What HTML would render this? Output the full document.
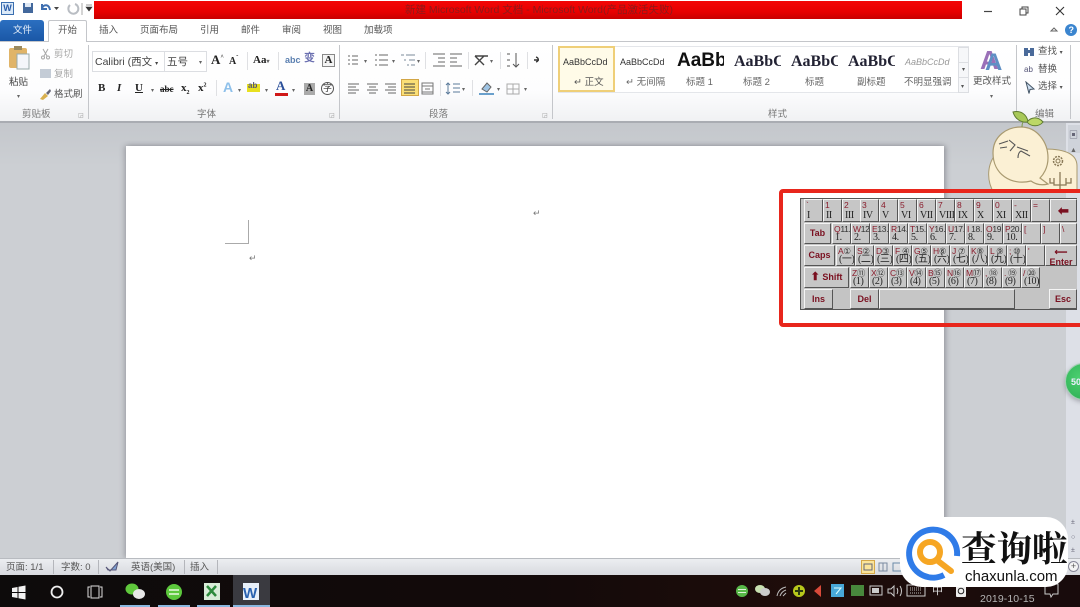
<!DOCTYPE html>
<html><head><meta charset="utf-8"><style>
*{box-sizing:border-box}
html,body{margin:0;padding:0;width:1080px;height:607px;overflow:hidden;background:#fff}
body{position:relative;font-family:"Liberation Sans","Noto Sans CJK SC",sans-serif;color:#555}
#w{position:absolute;left:0;top:0;width:1080px;height:607px;overflow:hidden;filter:blur(.35px)}
.a,.t{position:absolute}
.t{white-space:nowrap;font-size:9.500px;line-height:12px;margin-top:2px}
.s{font-family:"Liberation Serif","Noto Serif CJK SC",serif;font-weight:bold;color:#222;margin-top:0}
.d{font-size:6px;color:#666;margin-top:0}
.k{position:absolute;background:#c6c6c6;border:1px solid;border-color:#f4f4f4 #555 #555 #f4f4f4;font:10px/10px "Liberation Serif","Noto Sans CJK SC",serif;color:#222;overflow:hidden}
.k b{position:absolute;left:1px;top:0;color:#8a1c2c;font:8.500px/10px "Liberation Sans",sans-serif;white-space:nowrap;letter-spacing:-.3px}
.k i{position:absolute;left:2px;bottom:0;font-style:normal;white-space:nowrap;letter-spacing:-.4px;font-size:10px;line-height:10px}
.k.n{color:#7a1020;font:bold 9px/19px "Liberation Sans",sans-serif;text-align:center}
.ln{position:absolute;background:#c4c6ca;width:1px}
</style></head><body><div id="w">

<!-- title bar -->
<div class="a" style="left:94px;top:1px;width:868px;height:18px;background:linear-gradient(#f20606,#e70000 60%,#c80000)"></div>
<div class="t" style="left:405px;top:2px;font-size:10.500px;color:#8b1a1a">新建 Microsoft Word 文档 - Microsoft Word(产品激活失败)</div>
<div class="a" style="left:1px;top:2px;width:13px;height:13px;background:#dceaf8;border:1px solid #3b6fb0;color:#2a5ca8;font:bold 9px/11px 'Liberation Sans';text-align:center">W</div>
<svg class="a" style="left:0;top:0" width="94" height="20"><rect x="23" y="3" width="10" height="10" fill="#43689c"/><rect x="25" y="3" width="6" height="4" fill="#dfe8f4"/><path d="M42 4v5h5M42 8c2-4 7-4 8 2" stroke="#3f6fb0" stroke-width="2" fill="none"/><path d="M54 7h5l-2.500 3z" fill="#444"/><path d="M75 4a5 5 0 1 1-5 1" stroke="#b9bdc3" stroke-width="2" fill="none"/><path d="M82 3v12" stroke="#aaa"/><path d="M86 5h6M86 7h6l-3 4z" fill="#333" stroke="#333" stroke-width=".6"/></svg>
<svg class="a" style="left:975px;top:0" width="105" height="38"><path d="M9 11.500h8" stroke="#444" stroke-width="1.200"/><path d="M45 9h6v6h-6zM47 9V7h6v6h-2" fill="none" stroke="#444"/><path d="M81 7l8 8M89 7l-8 8" stroke="#333" stroke-width="1.100"/><path d="M76 31l3-3 3 3z" fill="none" stroke="#666"/><circle cx="96" cy="30" r="6" fill="#3b85cf"/><text x="93.500" y="33" font-size="9" font-weight="bold" fill="#fff" font-family="Liberation Sans">?</text></svg>

<!-- tabs -->
<div class="a" style="left:0;top:20px;width:44px;height:21px;background:linear-gradient(#2b6fc0,#1a57a6);border-radius:3px 3px 0 0"></div>
<div class="t" style="left:13px;top:23px;color:#e8f0fa">文件</div>
<div class="a" style="left:48px;top:20px;width:39px;height:22px;background:#fff;border:1px solid #c4c6ca;border-bottom:0;border-radius:2px 2px 0 0;z-index:2"></div>
<div class="t" style="left:58px;top:23px;z-index:3">开始</div>
<div class="t" style="left:99px;top:23px">插入</div>
<div class="t" style="left:140px;top:23px">页面布局</div>
<div class="t" style="left:200px;top:23px">引用</div>
<div class="t" style="left:241px;top:23px">邮件</div>
<div class="t" style="left:282px;top:23px">审阅</div>
<div class="t" style="left:323px;top:23px">视图</div>
<div class="t" style="left:364px;top:23px">加载项</div>

<!-- ribbon -->
<div class="a" style="left:0;top:41px;width:1080px;height:82px;background:linear-gradient(#fff,#fdfdfe 60%,#f0f1f3);border-top:1px solid #c4c6ca;border-bottom:2px solid #a9acb2"></div>
<div class="ln" style="left:88px;top:45px;height:74px"></div>
<div class="ln" style="left:339px;top:45px;height:74px"></div>
<div class="ln" style="left:552px;top:45px;height:74px"></div>
<div class="ln" style="left:1016px;top:45px;height:74px"></div>
<div class="ln" style="left:1070px;top:45px;height:74px"></div>

<!-- clipboard -->
<svg class="a" style="left:8px;top:45px" width="24" height="27"><rect x="1" y="3" width="18" height="20" rx="2" fill="#e0b468"/><rect x="6" y="1" width="8" height="4" fill="#9a8a60"/><path d="M9 9h12v15H9z" fill="#f4f6fa" stroke="#9aa"/></svg>
<div class="t" style="left:9px;top:75px;color:#444">粘贴</div>
<div class="t d" style="left:17px;top:91px">▾</div>
<svg class="a" style="left:40px;top:48px" width="11" height="12" stroke="#a8a8a8" fill="none"><path d="M3 1l4 7M8 1L4 8"/><circle cx="3" cy="9.500" r="1.500"/><circle cx="8" cy="9.500" r="1.500"/></svg>
<div class="t" style="left:54px;top:47px;color:#a8a8a8">剪切</div>
<div class="a" style="left:40px;top:69px;width:11px;height:9px;background:#c4ccd6"></div>
<div class="t" style="left:54px;top:67px;color:#a8a8a8">复制</div>
<svg class="a" style="left:38px;top:87px" width="14" height="14"><path d="M2 12l5-6 3 3-5 4z" fill="#d8b050"/><path d="M8 6l4-4 1 2-3 4z" fill="#667"/></svg>
<div class="t" style="left:54px;top:87px;color:#555">格式刷</div>
<div class="t" style="left:22px;top:107px;color:#777">剪贴板</div>
<div class="t d" style="left:78px;top:110px;color:#999">◲</div>

<!-- font -->
<div class="a" style="left:92px;top:51px;width:73px;height:21px;border:1px solid #dcdee2;background:#fff"></div>
<div class="a" style="left:164px;top:51px;width:43px;height:21px;border:1px solid #dcdee2;background:#fff"></div>
<div class="t" style="left:95px;top:54px;font-size:10.500px;color:#444">Calibri (西文 <span style="font-size:6px">▾</span></div>
<div class="t" style="left:167px;top:54px;font-size:10.500px;color:#444">五号</div>
<div class="t d" style="left:199px;top:57px">▾</div>
<div class="t s" style="left:211px;top:54px;font-size:13px">A<sup style="font-size:6px;line-height:0">^</sup></div>
<div class="t s" style="left:229px;top:56px;font-size:10px">A<sup style="font-size:6px;line-height:0">ˇ</sup></div>
<div class="t s" style="left:253px;top:54px;font-size:11px">Aa<span style="font-size:6px;color:#666">▾</span></div>
<div class="ln" style="left:247px;top:52px;height:18px;background:#dfe0e3"></div>
<div class="ln" style="left:278px;top:52px;height:18px;background:#dfe0e3"></div>
<div class="t" style="left:285px;top:52px;font-size:9px;color:#5a7fb0"><b>abc</b></div>
<div class="t" style="left:304px;top:50px;font-size:11px;color:#6a6fb0"><b>变</b></div>
<div class="a s" style="left:322px;top:54px;width:13px;height:13px;border:1px solid #888;font-size:11px;line-height:11px;text-align:center;background:#f4f4f4">A</div>
<div class="t s" style="left:98px;top:82px;font-size:11px">B</div>
<div class="t s" style="left:117px;top:82px;font-size:11px;font-style:italic">I</div>
<div class="t s" style="left:135px;top:82px;font-size:11px;text-decoration:underline">U</div>
<div class="t d" style="left:151px;top:85px">▾</div>
<div class="t s" style="left:160px;top:83px;font-size:9px;text-decoration:line-through">abc</div>
<div class="t s" style="left:181px;top:82px;font-size:11px">x<sub style="font-size:6px;line-height:0">2</sub></div>
<div class="t s" style="left:198px;top:82px;font-size:11px">x<sup style="font-size:6px;line-height:0">2</sup></div>
<div class="ln" style="left:216px;top:80px;height:16px;background:#dfe0e3"></div>
<div class="t" style="left:223px;top:79px;font-size:14px;color:#8ec0ea;font-weight:bold">A</div>
<div class="t d" style="left:238px;top:85px">▾</div>
<div class="a" style="left:247px;top:84px;width:13px;height:8px;background:#e8e020"></div>
<div class="t" style="left:248px;top:78px;font-size:8px;color:#557"><b>ab</b></div>
<div class="t d" style="left:265px;top:85px">▾</div>
<div class="t s" style="left:276px;top:80px;font-size:13px;color:#2a4f9a">A</div>
<div class="a" style="left:275px;top:93px;width:13px;height:3px;background:#d01818"></div>
<div class="t d" style="left:292px;top:85px">▾</div>
<div class="a s" style="left:304px;top:83px;width:11px;height:12px;background:#aaa;font-size:10px;line-height:12px;text-align:center">A</div>
<div class="a" style="left:321px;top:82px;width:13px;height:13px;border:1px solid #555;border-radius:50%;font-size:9px;line-height:11px;text-align:center;color:#333">字</div>
<div class="t" style="left:197px;top:107px;color:#777">字体</div>
<div class="t d" style="left:329px;top:110px;color:#999">◲</div>

<!-- paragraph -->
<div class="a" style="left:401px;top:79px;width:18px;height:17px;background:#fadf76;border:1px solid #d2a646"></div>
<svg class="a" style="left:345px;top:48px" width="205" height="50" stroke="#666" fill="none">
<path d="M3 8h2M3 12h2M3 16h2M7 8h6M7 12h6M7 16h6"/>
<path d="M30 7h2M30 12h2M30 17h2M34 7h9M34 12h9M34 17h9"/>
<path d="M56 7h3M59 12h2M62 17h2M61 7h9M64 12h6M66 17h4" stroke="#7a8a9a"/>
<path d="M88 6h12M93 10h7M93 14h7M88 18h12M105 6h12M105 10h7M105 14h7M105 18h12"/>
<path d="M130 8l9 9M139 8l-9 9M130 8h13" stroke="#444" stroke-width="1.400"/>
<path d="M162 6h3M162 12h3M162 18h3M171 5v14M168 16l3 3 3-3" stroke="#555"/>
<path d="M191 9c3 1 3 4 0 5M189 12h5" stroke="#333" stroke-width="1.400"/>
<path d="M3 36h11M3 39h8M3 42h11M3 45h8M22 36h11M24 39h7M22 42h11M24 45h7M40 36h11M43 39h8M40 42h11M43 45h8"/>
<path d="M59 36h11M59 39h11M59 42h11M59 45h11" stroke="#444"/>
<path d="M77 35h11v11H77zM77 38h11M80 41h5M77 44h11" stroke="#777"/>
<path d="M103 35v11M101 37l2-2 2 2M101 44l2 2 2-2M108 36h7M108 40h7M108 44h7" stroke="#5a7a9a"/>
<path d="M134 46h15" stroke="#6aa0cc" stroke-width="2"/><path d="M137 41l5-6 4 4-4 5z" fill="#9fc4e4"/>
<path d="M162 36h12v10h-12zM168 36v10M162 41h12" stroke="#aaa"/>
</svg>
<div class="t d" style="left:364px;top:56px">▾</div><div class="t d" style="left:392px;top:56px">▾</div><div class="t d" style="left:417px;top:56px">▾</div><div class="t d" style="left:490px;top:56px">▾</div>
<div class="t d" style="left:462px;top:84px">▾</div><div class="t d" style="left:497px;top:84px">▾</div><div class="t d" style="left:524px;top:84px">▾</div>
<div class="ln" style="left:425px;top:52px;height:17px;background:#dfe0e3"></div>
<div class="ln" style="left:468px;top:52px;height:17px;background:#dfe0e3"></div>
<div class="ln" style="left:500px;top:52px;height:17px;background:#dfe0e3"></div>
<div class="ln" style="left:527px;top:52px;height:17px;background:#dfe0e3"></div>
<div class="ln" style="left:440px;top:80px;height:16px;background:#dfe0e3"></div>
<div class="ln" style="left:472px;top:80px;height:16px;background:#dfe0e3"></div>
<div class="t" style="left:429px;top:107px;color:#777">段落</div>
<div class="t d" style="left:542px;top:110px;color:#999">◲</div>

<!-- styles gallery -->
<div class="a" style="left:558px;top:46px;width:411px;height:47px;background:#fff;border:1px solid #e4e6ea"></div>
<div class="a" style="left:558px;top:46px;width:57px;height:46px;background:#fffbe8;border:2px solid #efcf78"></div>
<div class="t" style="left:563px;top:54px;color:#333;font-size:9px">AaBbCcDd</div>
<div class="t" style="left:574px;top:75px;color:#555">↵ 正文</div>
<div class="t" style="left:620px;top:54px;color:#333;font-size:9px">AaBbCcDd</div>
<div class="t" style="left:626px;top:75px;color:#666">↵ 无间隔</div>
<div class="a" style="left:677px;top:50px;width:47px;height:22px;overflow:hidden;font:bold 19px/22px 'Liberation Sans';color:#111;white-space:nowrap">AaBb</div>
<div class="t" style="left:686px;top:75px;color:#666">标题 1</div>
<div class="a s" style="left:734px;top:52px;width:47px;height:20px;overflow:hidden;font-size:16px;line-height:20px;white-space:nowrap;color:#223">AaBbC</div>
<div class="t" style="left:743px;top:75px;color:#666">标题 2</div>
<div class="a s" style="left:791px;top:52px;width:47px;height:20px;overflow:hidden;font-size:16px;line-height:20px;white-space:nowrap;color:#223">AaBbC</div>
<div class="t" style="left:805px;top:75px;color:#666">标题</div>
<div class="a s" style="left:848px;top:52px;width:47px;height:20px;overflow:hidden;font-size:16px;line-height:20px;white-space:nowrap;color:#223">AaBbC</div>
<div class="t" style="left:857px;top:75px;color:#666">副标题</div>
<div class="t" style="left:905px;top:54px;color:#999;font-size:9px;font-style:italic">AaBbCcDd</div>
<div class="t" style="left:904px;top:75px;color:#666">不明显强调</div>
<div class="a" style="left:958px;top:47px;width:11px;height:46px;background:#f6f7f9;border:1px solid #dcdee2"></div>
<div class="a" style="left:958px;top:62px;width:11px;height:16px;border-top:1px solid #dcdee2;border-bottom:1px solid #dcdee2;color:#555;font-size:6px;line-height:14px;text-align:center">▾</div>
<div class="t d" style="left:961px;top:81px;color:#555">▾</div>
<div class="t" style="left:768px;top:107px;color:#777">样式</div>
<div class="t" style="left:980px;top:44px;font:bold 26px/28px 'Liberation Sans';color:#9a70b8">A</div>
<div class="t" style="left:985px;top:48px;font:bold 24px/26px 'Liberation Sans';color:#5f8fc4">A</div>
<div class="t" style="left:973px;top:74px;color:#555">更改样式</div>
<div class="t d" style="left:990px;top:91px">▾</div>

<!-- editing -->
<svg class="a" style="left:1023px;top:45px" width="13" height="13"><rect x="1" y="3" width="4" height="8" fill="#4a6a9a"/><rect x="7" y="3" width="4" height="8" fill="#4a6a9a"/><rect x="4" y="5" width="4" height="3" fill="#4a6a9a"/></svg>
<div class="t" style="left:1038px;top:44px">查找 <span style="font-size:6px">▾</span></div>
<div class="t" style="left:1024px;top:62px;font-size:8px;color:#557">ab</div>
<div class="t" style="left:1038px;top:62px">替换</div>
<svg class="a" style="left:1025px;top:81px" width="11" height="13"><path d="M1 1l8 7-4 .5-1 4z" fill="#cfe0f2" stroke="#456"/></svg>
<div class="t" style="left:1038px;top:79px">选择 <span style="font-size:6px">▾</span></div>
<div class="t" style="left:1035px;top:107px;color:#777">编辑</div>

<!-- workspace -->
<div class="a" style="left:0;top:123px;width:1080px;height:435px;background:linear-gradient(#c4c7cc,#cccfd3 10%,#cccfd3)"></div>
<div class="a" style="left:1066px;top:123px;width:14px;height:435px;background:#dde0e7"></div>
<div class="a" style="left:126px;top:146px;width:818px;height:412px;background:#fff;box-shadow:2px 0 5px rgba(70,70,80,.35),-2px 0 5px rgba(70,70,80,.25)"></div>
<div class="a" style="left:225px;top:243px;width:24px;height:1px;background:#aaa"></div>
<div class="a" style="left:248px;top:220px;width:1px;height:24px;background:#aaa"></div>
<div class="t" style="left:533px;top:205px;font-size:9px;color:#777">↵</div>
<div class="t" style="left:249px;top:250px;font-size:9px;color:#777">↵</div>

<!-- mascot -->
<div class="a" style="left:1068px;top:125px;width:12px;height:28px;background:#cfd3da"></div>
<div class="t" style="left:1069px;top:127px;font-size:9px;color:#667">▣</div>
<div class="t d" style="left:1070px;top:145px;font-size:7px">▲</div>
<svg class="a" style="left:985px;top:108px" width="95" height="85">
<path d="M12 45C2 55 1 72 9 85H92V58C92 46 80 41 60 41z" fill="#fbf0d4" stroke="#a99a70"/>
<path d="M8 45C8 28 22 19 36 19C52 19 63 34 63 50C63 60 58 67 55 70L63 76C55 78 50 76 46 73C26 78 8 66 8 45z" fill="#fbf0d4" stroke="#a99a70" stroke-width="1.200"/>
<path d="M37 19c0-3 1-6 3-7" stroke="#7e9a4a" fill="none"/>
<path d="M28 4c7-2 14 2 15 10-7 1-13-3-15-10z" fill="#a8c858" stroke="#5e7a30"/><path d="M42 14c4-5 11-6 16 0-4 5-12 5-16 0z" fill="#bcd868" stroke="#5e7a30"/>
<path d="M14 36l9-3M15 40l7-1M24 32l6 5-5 6" stroke="#555" fill="none" stroke-width="1.100"/><path d="M32 39l11 4M33 50c0-4 1-6 3-7l9 5" stroke="#555" fill="none" stroke-width="1.100"/>
<circle cx="73" cy="53" r="4.500" fill="none" stroke="#8a7a58" stroke-width="1.500" stroke-dasharray="2 1"/>
<circle cx="73" cy="53" r="2" fill="none" stroke="#8a7a58"/>
<path d="M75 64v18M69 70v7h12v-7M65 70v5h4M86 70v5h-5" stroke="#8a7a58" fill="none" stroke-width="1.300"/>
</svg>

<!-- green bubble -->
<div class="a" style="left:1065px;top:363px;width:37px;height:37px;border-radius:50%;background:radial-gradient(circle at 40% 40%,#4cd070,#28a850);border:1px solid #9fcfb0;box-shadow:0 2px 5px rgba(80,80,90,.4);color:#eef;font:bold 9px/36px 'Liberation Sans';padding-left:5px;overflow:hidden">50</div>

<!-- keyboard + frame -->
<div class="a" style="left:800px;top:198px;width:277px;height:112px;background:#c4c4c4;border:1px solid #555;border-right:0"></div>
<div id="kb">
<div class="k" style="left:804px;top:199px;width:19px;height:23px"><b>`</b><i>I</i></div>
<div class="k" style="left:823px;top:199px;width:19px;height:23px"><b>1</b><i>II</i></div>
<div class="k" style="left:842px;top:199px;width:19px;height:23px"><b>2</b><i>III</i></div>
<div class="k" style="left:860px;top:199px;width:19px;height:23px"><b>3</b><i>IV</i></div>
<div class="k" style="left:879px;top:199px;width:19px;height:23px"><b>4</b><i>V</i></div>
<div class="k" style="left:898px;top:199px;width:19px;height:23px"><b>5</b><i>VI</i></div>
<div class="k" style="left:917px;top:199px;width:19px;height:23px"><b>6</b><i>VII</i></div>
<div class="k" style="left:936px;top:199px;width:19px;height:23px"><b>7</b><i>VIII</i></div>
<div class="k" style="left:955px;top:199px;width:19px;height:23px"><b>8</b><i>IX</i></div>
<div class="k" style="left:974px;top:199px;width:19px;height:23px"><b>9</b><i>X</i></div>
<div class="k" style="left:993px;top:199px;width:19px;height:23px"><b>0</b><i>XI</i></div>
<div class="k" style="left:1012px;top:199px;width:19px;height:23px"><b>-</b><i>XII</i></div>
<div class="k" style="left:1031px;top:199px;width:19px;height:23px"><b>=</b></div>
<div class="k n" style="left:1050px;top:199px;width:27px;height:23px;font-size:13px;line-height:22px">⬅</div>

<div class="k n" style="left:804px;top:223px;width:27px;height:21px">Tab</div>
<div class="k" style="left:832px;top:223px;width:19px;height:21px"><b>Q<span style="color:#333">11.</span></b><i>1.</i></div>
<div class="k" style="left:851px;top:223px;width:19px;height:21px"><b>W<span style="color:#333">12.</span></b><i>2.</i></div>
<div class="k" style="left:870px;top:223px;width:19px;height:21px"><b>E<span style="color:#333">13.</span></b><i>3.</i></div>
<div class="k" style="left:889px;top:223px;width:19px;height:21px"><b>R<span style="color:#333">14.</span></b><i>4.</i></div>
<div class="k" style="left:908px;top:223px;width:19px;height:21px"><b>T<span style="color:#333">15.</span></b><i>5.</i></div>
<div class="k" style="left:927px;top:223px;width:19px;height:21px"><b>Y<span style="color:#333">16.</span></b><i>6.</i></div>
<div class="k" style="left:946px;top:223px;width:19px;height:21px"><b>U<span style="color:#333">17.</span></b><i>7.</i></div>
<div class="k" style="left:965px;top:223px;width:19px;height:21px"><b>I<span style="color:#333"> 18.</span></b><i>8.</i></div>
<div class="k" style="left:984px;top:223px;width:19px;height:21px"><b>O<span style="color:#333">19.</span></b><i>9.</i></div>
<div class="k" style="left:1003px;top:223px;width:19px;height:21px"><b>P<span style="color:#333">20.</span></b><i>10.</i></div>
<div class="k" style="left:1022px;top:223px;width:19px;height:21px"><b>[</b></div>
<div class="k" style="left:1041px;top:223px;width:19px;height:21px"><b>]</b></div>
<div class="k" style="left:1060px;top:223px;width:17px;height:21px"><b>\</b></div>

<div class="k n" style="left:804px;top:245px;width:31px;height:21px">Caps</div>
<div class="k" style="left:836px;top:245px;width:19px;height:21px"><b>A<span style="color:#333">①</span></b><i>(一)</i></div>
<div class="k" style="left:855px;top:245px;width:19px;height:21px"><b>S<span style="color:#333">②</span></b><i>(二)</i></div>
<div class="k" style="left:874px;top:245px;width:19px;height:21px"><b>D<span style="color:#333">③</span></b><i>(三)</i></div>
<div class="k" style="left:893px;top:245px;width:19px;height:21px"><b>F<span style="color:#333"> ④</span></b><i>(四)</i></div>
<div class="k" style="left:912px;top:245px;width:19px;height:21px"><b>G<span style="color:#333">⑤</span></b><i>(五)</i></div>
<div class="k" style="left:931px;top:245px;width:19px;height:21px"><b>H<span style="color:#333">⑥</span></b><i>(六)</i></div>
<div class="k" style="left:950px;top:245px;width:19px;height:21px"><b>J<span style="color:#333"> ⑦</span></b><i>(七)</i></div>
<div class="k" style="left:969px;top:245px;width:19px;height:21px"><b>K<span style="color:#333">⑧</span></b><i>(八)</i></div>
<div class="k" style="left:988px;top:245px;width:19px;height:21px"><b>L<span style="color:#333"> ⑨</span></b><i>(九)</i></div>
<div class="k" style="left:1007px;top:245px;width:19px;height:21px"><b>;<span style="color:#333"> ⑩</span></b><i>(十)</i></div>
<div class="k" style="left:1026px;top:245px;width:19px;height:21px"><b>'</b></div>
<div class="k n" style="left:1045px;top:245px;width:32px;height:21px;line-height:10px;padding-top:1px;white-space:nowrap"><span style="font-size:9px">⟵</span><br>Enter</div>

<div class="k n" style="left:804px;top:267px;width:45px;height:21px;white-space:nowrap"><span style="font-size:11px">⬆</span> Shift</div>
<div class="k" style="left:850px;top:267px;width:19px;height:21px"><b>Z<span style="color:#333">⑪</span></b><i>(1)</i></div>
<div class="k" style="left:869px;top:267px;width:19px;height:21px"><b>X<span style="color:#333">⑫</span></b><i>(2)</i></div>
<div class="k" style="left:888px;top:267px;width:19px;height:21px"><b>C<span style="color:#333">⑬</span></b><i>(3)</i></div>
<div class="k" style="left:907px;top:267px;width:19px;height:21px"><b>V<span style="color:#333">⑭</span></b><i>(4)</i></div>
<div class="k" style="left:926px;top:267px;width:19px;height:21px"><b>B<span style="color:#333">⑮</span></b><i>(5)</i></div>
<div class="k" style="left:945px;top:267px;width:19px;height:21px"><b>N<span style="color:#333">⑯</span></b><i>(6)</i></div>
<div class="k" style="left:964px;top:267px;width:19px;height:21px"><b>M<span style="color:#333">⑰</span></b><i>(7)</i></div>
<div class="k" style="left:983px;top:267px;width:19px;height:21px"><b>,<span style="color:#333"> ⑱</span></b><i>(8)</i></div>
<div class="k" style="left:1002px;top:267px;width:19px;height:21px"><b>.<span style="color:#333"> ⑲</span></b><i>(9)</i></div>
<div class="k" style="left:1021px;top:267px;width:19px;height:21px"><b>/<span style="color:#333"> ⑳</span></b><i>(10)</i></div>

<div class="k n" style="left:804px;top:289px;width:29px;height:20px">Ins</div>
<div class="k n" style="left:850px;top:289px;width:29px;height:20px">Del</div>
<div class="k" style="left:879px;top:289px;width:136px;height:20px"></div>
<div class="k n" style="left:1049px;top:289px;width:28px;height:20px">Esc</div>
</div>
<div class="a" style="left:779px;top:189px;width:310px;height:138px;border:4px solid #e8261c;border-radius:4px"></div>

<!-- status bar -->
<div class="a" style="left:0;top:558px;width:1080px;height:17px;background:linear-gradient(#eceef1,#d8dadf);border-top:1px solid #b8bbc0"></div>
<div class="t" style="left:6px;top:560px;color:#555">页面: 1/1</div>
<div class="t" style="left:61px;top:560px;color:#555">字数: 0</div>
<div class="t" style="left:131px;top:560px;color:#555">英语(美国)</div>
<div class="t" style="left:190px;top:560px;color:#555">插入</div>
<div class="ln" style="left:53px;top:560px;height:14px;background:#b4b6bb"></div>
<div class="ln" style="left:98px;top:560px;height:14px;background:#b4b6bb"></div>
<div class="ln" style="left:184px;top:560px;height:14px;background:#b4b6bb"></div>
<div class="ln" style="left:217px;top:560px;height:14px;background:#b4b6bb"></div>
<svg class="a" style="left:104px;top:559px" width="16" height="15"><path d="M2 8l4 4 8-9-2 8H4z" fill="#7f9fd0" stroke="#557"/></svg>
<div class="a" style="left:861px;top:560px;width:14px;height:14px;background:#fbe49a;border:1px solid #d6a848"></div>
<svg class="a" style="left:860px;top:558px" width="42" height="17" fill="none" stroke="#667"><path d="M4 6h8v6H4z"/><path d="M19 5h8v8h-8zM23 5v8" stroke="#7a8aa0"/><path d="M33 5h8v8h-8z" stroke="#6a8aa8"/></svg>

<!-- taskbar -->
<div class="a" style="left:0;top:575px;width:1080px;height:32px;background:linear-gradient(90deg,#0d0b0b,#130a0a 50%,#1f0d0a 75%,#180b0c)"></div>
<div class="a" style="left:233px;top:575px;width:37px;height:32px;background:#3a3a40"></div>
<div class="a" style="left:120px;top:605px;width:30px;height:2px;background:#8ab8e0"></div>
<div class="a" style="left:158px;top:605px;width:32px;height:2px;background:#8ab8e0"></div>
<div class="a" style="left:197px;top:605px;width:33px;height:2px;background:#8ab8e0"></div>
<div class="a" style="left:233px;top:605px;width:37px;height:2px;background:#8ab8e0"></div>
<svg class="a" style="left:0;top:575px" width="280" height="32">
<path d="M12 13l5.500-1v5H12zM18.500 11.700l7-1.200v6.500h-7zM12 18h5.500v5l-5.500-1zM18.500 18h7v6.500l-7-1.200z" fill="#f2f2f2"/>
<circle cx="57" cy="17" r="5.500" fill="none" stroke="#eee" stroke-width="1.800"/>
<path d="M90 12h-2v10h2M100 12h2v10h-2" fill="none" stroke="#ddd"/><rect x="91" y="11" width="8" height="12" fill="none" stroke="#ddd"/>
<ellipse cx="132" cy="14" rx="6.500" ry="5.500" fill="#5fc83c"/><ellipse cx="139" cy="19" rx="6" ry="5" fill="#e8e8e8"/>
<circle cx="174" cy="17" r="8" fill="#5cc83c"/><path d="M169 15h10M169 19h10" stroke="#e8f8e0" stroke-width="1.500"/>
<rect x="204" y="8" width="16" height="17" fill="#d8ecd8"/><path d="M207 11l9 10M216 11l-9 10" stroke="#2c8a3c" stroke-width="2.500"/>
<rect x="243" y="8" width="16" height="17" fill="#e8f0fa"/>
<text x="243" y="23" font-family="Liberation Sans" font-weight="bold" font-size="15" fill="#2a62b0">W</text>
</svg>
<svg class="a" style="left:730px;top:575px" width="350" height="32">
<circle cx="12" cy="16" r="6" fill="#58b848"/><path d="M8 14.500h8M8 17.500h8" stroke="#dff0d8"/>
<ellipse cx="30" cy="14" rx="5" ry="4" fill="#c8e0b0"/><ellipse cx="35" cy="17" rx="5" ry="4" fill="#ccc"/>
<path d="M47 21c1-5 4-8 9-9M50 21c1-3 3-5 6-6M53 21l3-3" stroke="#bbb" fill="none"/>
<circle cx="69" cy="16" r="6" fill="#b8c81c"/><path d="M69 12v8M65 16h8" stroke="#2a3a10" stroke-width="2"/>
<path d="M84 16l7-6v12z" fill="#d84a3a"/>
<rect x="101" y="9" width="13" height="13" fill="#48a8d8"/><path d="M104 13h7l-5 6" stroke="#dff" fill="none"/>
<rect x="121" y="10" width="13" height="11" fill="#48883c"/>
<rect x="140" y="11" width="12" height="9" fill="none" stroke="#ccc"/><rect x="142" y="13" width="7" height="5" fill="#ccc"/>
<path d="M158 14h3l3-3v10l-3-3h-3zM167 13c1 2 1 4 0 6M170 11c2 3 2 7 0 10" stroke="#ccc" fill="none"/>
<rect x="177" y="10" width="18" height="11" fill="none" stroke="#ccc"/><path d="M180 13h12M180 15h12M180 18h12" stroke="#bbb" stroke-dasharray="1 1"/>
<rect x="226" y="11" width="10" height="11" rx="1" fill="#eee"/><circle cx="231" cy="16" r="2.800" fill="none" stroke="#222"/>
<path d="M315 9h13v10h-5l-2 3-1-3h-5z" fill="none" stroke="#ccc"/>
</svg>
<div class="t" style="left:932px;top:583px;color:#ddd;font-size:11px">中</div>
<div class="t" style="left:980px;top:591px;color:#b4b4b4;font-size:10.500px;letter-spacing:.1px">2019-10-15</div>

<!-- scroll side bits -->
<div class="t d" style="left:1071px;top:517px;font-size:7px;color:#667">±</div>
<div class="t d" style="left:1071px;top:532px;font-size:7px;color:#667">○</div>
<div class="t d" style="left:1071px;top:545px;font-size:7px;color:#667">±</div>
<div class="a" style="left:1068px;top:561px;width:11px;height:11px;border:1px solid #889;border-radius:50%;background:#f4f4f4;font:9px/9px 'Liberation Sans';text-align:center">+</div>

<!-- logo -->
<div class="a" style="left:900px;top:517px;width:168px;height:70px;background:#fff;border-radius:22px"></div>
<svg class="a" style="left:903px;top:518px" width="66" height="66">
<path d="M54 38A24 24 0 1 0 41 57" fill="none" stroke="#2f7be8" stroke-width="6"/>
<circle cx="27" cy="34" r="10" fill="none" stroke="#f6a623" stroke-width="6"/>
<path d="M35 43l13 10" stroke="#f6a623" stroke-width="6" stroke-linecap="round"/>
</svg>
<div class="t" style="left:961px;top:524px;margin:0;font:bold 35.500px/46px 'Noto Serif CJK SC',serif;color:#111">查询啦</div>
<div class="t" style="left:965px;top:568px;margin:0;font:15px/18px 'Liberation Sans',sans-serif;color:#111">chaxunla.com</div>
</div></body></html>
